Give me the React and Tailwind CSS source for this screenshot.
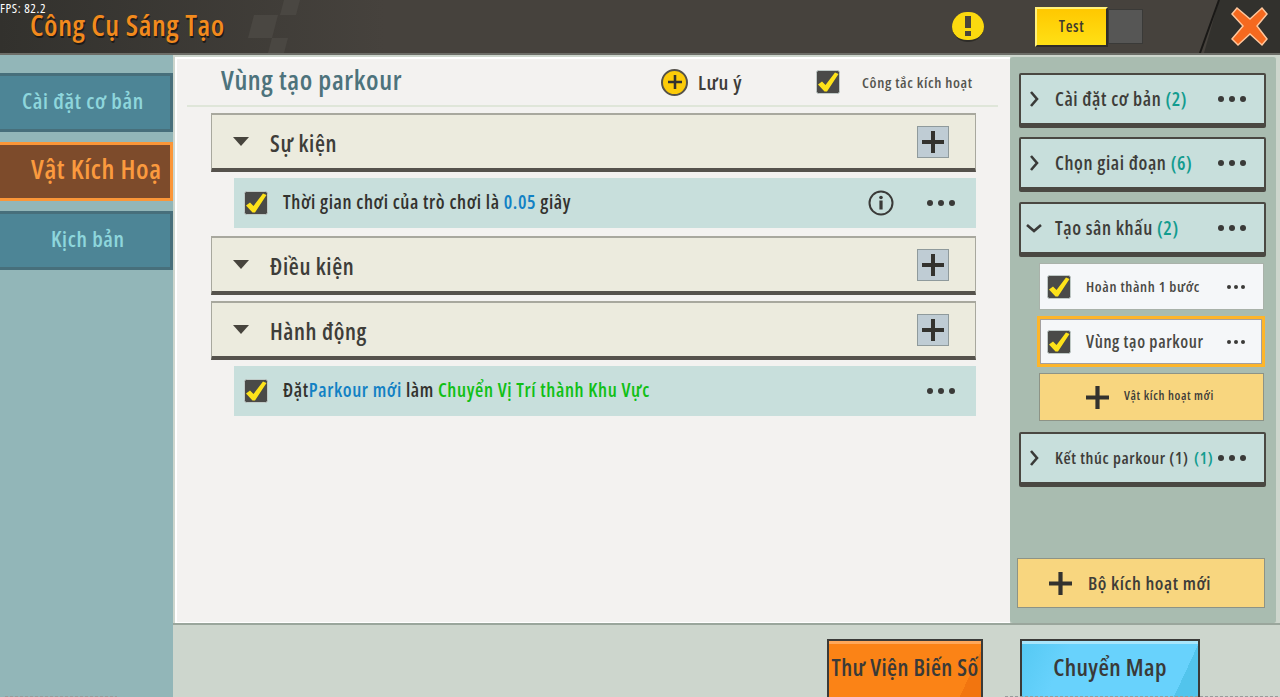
import React from 'react';

const CheckBox = () => (
  <svg width="24" height="24" viewBox="0 0 24 24" className="shrink-0">
    <rect x="0.5" y="0.5" width="23" height="23" rx="2" fill="#4a4a48" stroke="#bfc9c6" />
    <path d="M2 14.5 L6 11.5 L9.5 15 L19 2.5 L22.5 4 L11 21.5 L8.5 21.5 Z" fill="#fde21a" />
  </svg>
);

const Dots = ({ small }) => (
  <div className={`flex shrink-0 ${small ? 'gap-[3px]' : 'gap-[5px]'}`}>
    {[0, 1, 2].map((i) => (
      <span key={i} className={`rounded-full bg-[#3a3a38] ${small ? 'w-[4px] h-[4px]' : 'w-[6px] h-[6px]'}`} />
    ))}
  </div>
);

const Plus = ({ size = 22 }) => (
  <svg width={size} height={size} viewBox="0 0 22 22" className="shrink-0">
    <path d="M9 0h4v9h9v4h-9v9H9v-9H0V9h9z" fill="#33322e" />
  </svg>
);

const Chevron = ({ open }) => (
  <svg width="16" height="16" viewBox="0 0 16 16" className="shrink-0">
    <path
      d={open ? 'M1 5 L8 11 L15 5' : 'M5 1 L11 8 L5 15'}
      fill="none"
      stroke="#3a3a38"
      strokeWidth="2.6"
    />
  </svg>
);

const SideTab = ({ label, active, className }) => (
  <div
    className={`h-[59px] flex items-center border-[3px] border-l-0 pb-[5px] ${
      active ? 'bg-[#7d4b2b] border-[#fb9638] text-[#fb9a3e] text-[27px] pb-[3px]' : 'bg-[#4d8596] border-[#476f7b] text-[#8ed6dc] text-[22px]'
    } ${className}`}
  >
    <span className="whitespace-nowrap">{label}</span>
  </div>
);

const EventHeader = ({ label }) => (
  <div className="ml-[34px] w-[765px] h-[59px] bg-[#ecebde] border border-t-2 border-[#a8a89e] border-b-[4px] border-b-[#55524c] flex items-center pl-[21px] pr-[26px]">
    <span className="w-0 h-0 border-x-[8px] border-x-transparent border-t-[9px] border-t-[#47443d]" />
    <span className="ml-[21px] mt-[3px] text-[23px] text-[#3e3d39] flex-1">{label}</span>
    <div className="w-[32px] h-[32px] bg-[#bfccd4] border border-[#8f9a9c] flex items-center justify-center">
      <Plus size={22} />
    </div>
  </div>
);

const EventRow = ({ children, info }) => (
  <div className="ml-[57px] w-[742px] h-[50px] bg-[#c8dfdc] flex items-center pl-[10px] pr-[21px]">
    <CheckBox />
    <div className="ml-[15px] -mt-[2px] text-[19px] text-[#33322e] flex-1 whitespace-nowrap">{children}</div>
    {info && (
      <svg width="26" height="26" viewBox="0 0 26 26" className="mr-[33px]">
        <circle cx="13" cy="13" r="11.5" fill="none" stroke="#3a3a38" strokeWidth="2" />
        <circle cx="13" cy="7.5" r="1.8" fill="#3a3a38" />
        <rect x="11.4" y="10.5" width="3.2" height="9" fill="#3a3a38" />
      </svg>
    )}
    <Dots />
  </div>
);

const TreeCard = ({ label, count, open, small, className = '' }) => (
  <div className={`ml-[9px] w-[247px] h-[55px] shrink-0 bg-[#c8dfdc] border-2 border-[#4a4842] border-b-[5px] rounded-[2px] flex items-center pl-[5px] pr-[18px] ${className}`}>
    <Chevron open={open} />
    <span className={`ml-[13px] text-[#3e3d39] flex-1 whitespace-nowrap ${small ? 'text-[16.5px]' : 'text-[19px]'}`}>
      {label} <span className={`text-[#139c8f] ${small ? 'ml-[2px]' : ''}`}>{count}</span>
    </span>
    <Dots />
  </div>
);

const SubItem = ({ label, selected }) => (
  <div
    className={
      selected
        ? 'ml-[27px] w-[228px] h-[51px] shrink-0 border-[3px] border-[#fdb52a] mt-[6px]'
        : 'ml-[29px] w-[225px] h-[47px] shrink-0 mt-[6px]'
    }
  >
    <div className={`w-full h-full bg-[#f5f7f9] border flex items-center ${selected ? 'border-[#a39f9f] pl-[6px] pr-[16px]' : 'border-[#a9b2aa] pl-[7px] pr-[18px]'}`}>
      <CheckBox />
      <span className={`ml-[15px] flex-1 whitespace-nowrap text-[#4a4945] ${selected ? 'text-[17px]' : 'text-[14.8px]'}`}>{label}</span>
      <Dots small />
    </div>
  </div>
);

const App = () => {
  return (
    <div className="relative w-[1280px] h-[697px] overflow-hidden bg-[#cdd6cd] font-['Open_Sans',sans-serif] [font-stretch:condensed] font-semibold tracking-[0.62px]">
      {/* thanh tieu de */}
      <div className="relative h-[55px] bg-[linear-gradient(90deg,#32312d,#46423d_30%,#46423d)] border-b-2 border-[#6d6e68] flex items-center">
        <svg width="1280" height="53" viewBox="0 0 1280 53" className="absolute left-0 top-0">
          <path d="M254 15h24l-6 23h-24z" fill="#4a4742" />
          <path d="M284 0h16l-4 15h-16z" fill="#4a4742" />
          <path d="M272 38h16l-4 15h-16z" fill="#4a4742" />
          <path d="M1219 0h61v53h-76z" fill="#32312d" />
          <path d="M1219 0 L1200 53" stroke="#191816" strokeWidth="2" />
        </svg>
        <span className="relative ml-[30px] -mt-[4px] text-[29px] text-[#f28a1d] [text-shadow:1px_2px_0_#1d1b18] whitespace-nowrap">
          Công Cụ Sáng Tạo
        </span>
        <div className="relative ml-auto flex items-center">
          <div className="w-[32px] h-[30px] rounded-full bg-[#fbd90f] border-b-2 border-[#2e2c28] flex items-center justify-center">
            <svg width="6" height="20" viewBox="0 0 6 20">
              <path d="M0 0h6v12H0zM0 15h6v5H0z" fill="#4a453a" />
            </svg>
          </div>
          <div className="ml-[51px] flex items-center">
            <div className="w-[73px] h-[40px] bg-[linear-gradient(180deg,#ffc800,#ffe015)] border-2 border-[#2f2d29] border-t-[#fff07a] border-l-[#fff07a] flex items-center justify-center text-[15.5px] text-[#3e3a2e]">
              Test
            </div>
            <div className="w-[35px] h-[35px] bg-[#565655] border border-[#3a3a38]" />
          </div>
          <svg width="38" height="41" viewBox="0 0 38 41" className="ml-[88px] mr-[11px]">
            <path d="M6 2 L19 13 L31 2 L36 8 L26 20 L36 33 L31 39 L19 28 L7 39 L1 33 L12 20 L1 8 Z" fill="#f5691f" />
            <path d="M6 2 L19 13 L31 2 L36 8 L26 20 L36 33 L31 39 L19 28 L7 39 L1 33 L12 20 L1 8 Z" fill="none" stroke="#ffc79d" strokeWidth="1.5" />
          </svg>
        </div>
      </div>

      <div className="flex h-[642px]">
        {/* cot trai */}
        <div className="w-[173px] shrink-0 bg-[#92b6b8] pt-[18px] flex flex-col gap-[10px]">
          <SideTab label="Cài đặt cơ bản" className="pl-[22px]" />
          <SideTab label="Vật Kích Hoạ" active className="pl-[31px]" />
          <SideTab label="Kịch bản" className="pl-[51px]" />
        </div>

        <div className="flex-1 flex flex-col">
          <div className="flex h-[570px] shrink-0 border-b-2 border-[#9aa69c]">
            {/* noi dung giua */}
            <div className="ml-[2px] mt-[2px] w-[835px] shrink-0 bg-[#f3f2f0] border-2 border-white border-r-0 border-b-[1px]">
              <div className="h-[48px] ml-[10px] w-[811px] border-b-2 border-[#dfe6d9] flex items-center">
                <span className="ml-[34px] text-[27px] text-[#4d737c] w-[440px] shrink-0 -mt-[3px]">Vùng tạo parkour</span>
                <span className="w-[27px] h-[27px] shrink-0 rounded-full bg-[#fccb09] border-2 border-[#55524a] flex items-center justify-center">
                  <Plus size={14} />
                </span>
                <span className="ml-[10px] text-[20.5px] text-[#3e3d39] w-[118px] shrink-0">Lưu ý</span>
                <CheckBox />
                <span className="ml-[22px] text-[15px] text-[#55554f] whitespace-nowrap">Công tắc kích hoạt</span>
              </div>
              <div className="flex flex-col">
                <div className="mt-[6px]" />
                <EventHeader label="Sự kiện" />
                <div className="mt-[6px]" />
                <EventRow info>
                  Thời gian chơi của trò chơi là <span className="text-[#1281c4]">0.05</span> giây
                </EventRow>
                <div className="mt-[8px]" />
                <EventHeader label="Điều kiện" />
                <div className="mt-[6px]" />
                <EventHeader label="Hành động" />
                <div className="mt-[6px]" />
                <EventRow>
                  Đặt<span className="text-[#1281c4]">Parkour mới</span> làm{' '}
                  <span className="text-[#10c015]">Chuyển Vị Trí thành Khu Vực</span>
                </EventRow>
              </div>
            </div>

            {/* cot phai */}
            <div className="mt-[2px] w-[267px] shrink-0 bg-[#a9bcb0] rounded-[3px] border-r border-[#cdd6cd] flex flex-col pt-[16px]">
              <TreeCard label="Cài đặt cơ bản" count="(2)" />
              <TreeCard label="Chọn giai đoạn" count="(6)" className="mt-[9px]" />
              <TreeCard label="Tạo sân khấu" count="(2)" open className="mt-[10px]" />
              <SubItem label="Hoàn thành 1 bước" />
              <SubItem label="Vùng tạo parkour" selected />
              <div className="ml-[29px] mt-[6px] w-[225px] h-[48px] shrink-0 bg-[#f8d67f] border border-[#8d9386] flex items-center pl-[46px]">
                <Plus size={23} />
                <span className="ml-[15px] -mt-[2px] text-[12.5px] text-[#3e3d39] whitespace-nowrap">Vật kích hoạt mới</span>
              </div>
              <TreeCard label="Kết thúc parkour (1)" count="(1)" small className="mt-[11px]" />
              <div className="ml-[7px] mt-[71px] w-[248px] h-[50px] shrink-0 bg-[#f8d67f] border border-[#8d9386] flex items-center pl-[31px]">
                <Plus size={23} />
                <span className="ml-[16px] text-[18.5px] text-[#3e3d39] whitespace-nowrap">Bộ kích hoạt mới</span>
              </div>
            </div>
          </div>

          {/* nut duoi */}
          <div className="flex-1 flex items-end pl-[654px]">
            <div className="w-[156px] h-[58px] shrink-0 bg-[linear-gradient(115deg,#fb8316_88%,#f2750f_88%)] border-2 border-[#3a3a38] border-b-0 shadow-[inset_0_3px_0_#ffa85a] flex items-center justify-center pb-[4px] text-[23px] tracking-[0.4px] text-[#3a3a38] whitespace-nowrap">
              Thư Viện Biến Số
            </div>
            <div className="ml-[37px] w-[180px] h-[58px] shrink-0 bg-[linear-gradient(115deg,#55c9f3_0%,#68d2fc_25%,#68d2fc_88%,#52c4ec_88%)] border-2 border-[#3a3a38] border-b-0 shadow-[inset_0_3px_0_#a8e6fb] flex items-center justify-center pb-[4px] text-[24px] tracking-[0.4px] text-[#3a3a38] whitespace-nowrap">
              Chuyển Map
            </div>
          </div>
        </div>
      </div>

      {/* fps */}
      <div className="absolute left-0 top-[2px] text-[13px] font-medium tracking-[0.6px] leading-none text-white whitespace-nowrap">FPS: 82.2</div>
      {/* chu mo o day man hinh */}
      <div className="absolute left-[5px] bottom-0 w-[112px] h-px bg-[repeating-linear-gradient(90deg,#9a9a9a_0_3px,transparent_3px_5px)]" />
      <div className="absolute left-[1005px] bottom-0 w-[275px] h-px bg-[repeating-linear-gradient(90deg,#9a9a9a_0_3px,transparent_3px_5px)]" />
    </div>
  );
};

export default App;
